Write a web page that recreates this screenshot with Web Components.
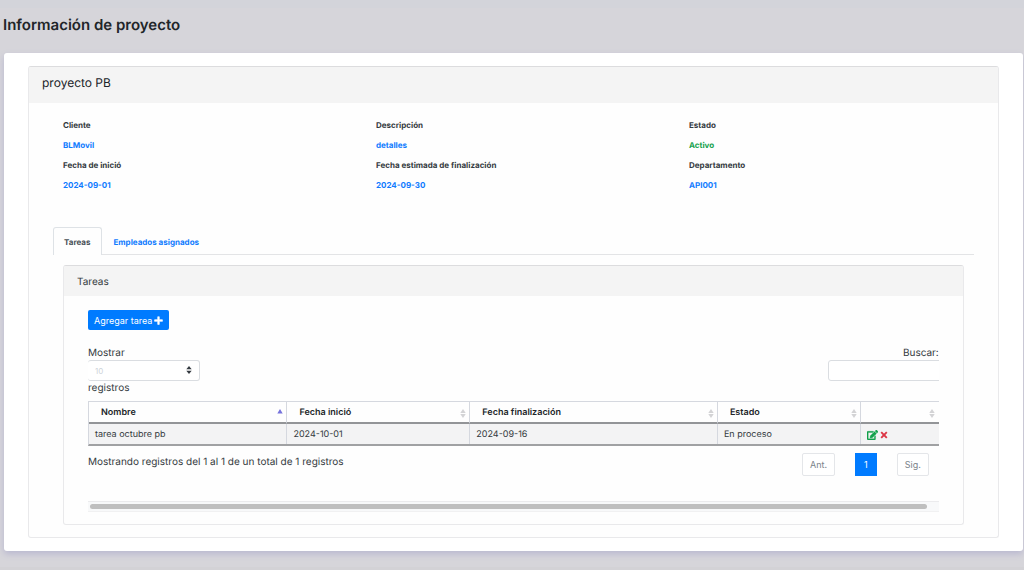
<!DOCTYPE html>
<html lang="es">
<head>
<meta charset="utf-8">
<title>Información de proyecto</title>
<style>
  html { background: #d6d5da; }
  body { margin: 0; font-family: Inter, "Liberation Sans", sans-serif; color: #343a40; text-rendering: geometricPrecision; }
</style>
</head>
<body>
<project-page></project-page>

<template id="page-tpl">
  <style>
    :host { display: block; border-top: 8px solid #d3d4da; border-bottom: 3px solid #d3d2d6; padding: 0 1px 16px 4px; }
    h1 { margin: 0 0 0 -1px; font-size: 15px; line-height: 34px; font-weight: 600; color: #212529; }
    main { margin-top: 11px; padding: 13px 24px; background: #fff; border-radius: 3px; box-shadow: 0 3px 6px #b9b8d0; }
    .fields { display: grid; grid-template-columns: repeat(3, 1fr); padding: 12px 0 0 34px; margin-right: -4px; }
    .tasks { padding: 10px 34px 12px; }
    nav { padding: 32px 24px 0; }
  </style>
  <h1>Información de proyecto</h1>
  <main>
    <ui-card class="outer">
      <span slot="title">proyecto PB</span>
      <div class="fields">
        <info-field label="Cliente">BLMovil</info-field>
        <info-field label="Descripción">detalles</info-field>
        <info-field label="Estado" tone="success">Activo</info-field>
        <info-field label="Fecha de inició">2024-09-01</info-field>
        <info-field label="Fecha estimada de finalización">2024-09-30</info-field>
        <info-field label="Departamento">API001</info-field>
      </div>
      <nav><tab-bar></tab-bar></nav>
      <div class="tasks">
        <ui-card small>
          <span slot="title">Tareas</span>
          <task-list></task-list>
        </ui-card>
      </div>
    </ui-card>
  </main>
</template>

<template id="card-tpl">
  <style>
    :host { display: block; border: 1px solid #e9e9eb; border-top-color: #dcdcde; border-radius: 3px; background: #fefefe; }
    h2 { margin: 0; padding: 0 13px; font-size: 12px; line-height: 32px; padding-bottom: 4px; font-weight: 400; background: #f4f4f4; color: #212529; border-radius: 2px 2px 0 0; }
    :host([small]) h2 { font-size: 10px; line-height: 28px; padding-top: 2px; padding-bottom: 0; color: #343a40; }
  </style>
  <h2><slot name="title"></slot></h2>
  <slot></slot>
</template>

<template id="field-tpl">
  <style>
    :host { display: block; font-size: 8px; line-height: 20px; font-weight: 700; }
    dl, dd { margin: 0; }
    dt { color: #343a40; }
    dd { color: #0f7bff; }
    :host([tone="success"]) dd { color: #12a14b; }
  </style>
  <dl><dt></dt><dd><slot></slot></dd></dl>
</template>

<template id="tabs-tpl">
  <style>
    :host { display: flex; border-bottom: 1px solid #e3e4e6; font-size: 8px; line-height: 24px; font-weight: 700; }
    a { padding: 2px 11px 0 10px; color: #0f7bff; text-decoration: none; border: 1px solid transparent; border-bottom: 0; }
    a[aria-current] { color: #495057; background: #fefefe; border-color: #dee2e6; border-radius: 3px 3px 0 0; margin-bottom: -1px; padding-bottom: 1px; }
  </style>
  <a href="#tareas" aria-current="page">Tareas</a><a href="#empleados">Empleados asignados</a>
</template>

<template id="list-tpl">
  <style>
    :host { display: block; padding: 14px 24px 12px; font-size: 10px; line-height: 14px; }
    .add { display: flex; align-items: center; gap: 2px; height: 20px; padding: 0 6px; border: 0; border-radius: 2px; background: #007bff; color: #fff; font: 9px Inter, "Liberation Sans", sans-serif; }
    .add svg { width: 9px; height: 9px; }
    .scroll { overflow: hidden; margin-top: 16px; }
    .wide { width: 101.5%; }
    .bar { display: flex; justify-content: space-between; }
    label { display: block; padding-top: 1px; line-height: 13px; }
    .find { text-align: right; display: grid; justify-items: end; align-content: start; padding-right: 13px; }
    .pick { position: relative; display: block; width: 112px; }
    .pick svg { position: absolute; right: 8px; top: 6px; width: 6px; height: 8px; pointer-events: none; }
    select, input { box-sizing: border-box; display: block; height: 21px; border: 1px solid #dadde1; border-radius: 3px; background: #fff; font: 8px Inter, "Liberation Sans", sans-serif; }
    select { appearance: none; width: 100%; border-left: 0; padding: 0 7px; color: #ced4da; }
    input { width: 124px; margin-right: -13px; }
    table { width: 100%; margin-top: 6px; table-layout: fixed; border-collapse: separate; border-spacing: 0; border-top: 1px solid #d5d8df; border-left: 1px solid #d5d8df; border-bottom: 2px solid #a0a1a3; font-size: 9px; }
    th, td { box-sizing: border-box; text-align: left; border-right: 1px solid #d5d8df; }
    th { height: 22px; padding: 2px 12px 0; color: #212529; font-weight: 600; border-bottom: 2px solid #929497; }
    td { height: 20px; padding: 2px 6px 0; background: #f3f3f4; line-height: 18px; }
    .head { display: flex; justify-content: space-between; align-items: center; margin-right: -9px; min-height: 14px; }
    th:last-child .head { margin-right: -6px; justify-content: flex-end; padding-right: 10px; }
    .head svg { width: 6px; height: 9px; }
    .acts { display: flex; align-items: center; gap: 2px; height: 16px; }
    .acts button { display: flex; padding: 0; border: 0; background: none; }
    .edit svg { width: 11px; height: 10px; }
    .del svg { width: 8px; height: 8px; }
    .foot { display: flex; justify-content: space-between; padding: 7px 23px 0 0; }
    .foot p { margin: 0; line-height: 18px; }
    .pages { display: flex; gap: 20px; }
    .pages button { box-sizing: border-box; height: 23px; padding: 0 7px; border: 1px solid #e4e6e9; border-radius: 2px; background: #fff; color: #7b838a; font: 9px Inter, "Liberation Sans", sans-serif; }
    .pages .now { background: #007bff; border-color: #007bff; color: #fff; border-radius: 0; padding: 0 8px; }
    .track { margin-top: 25px; padding: 2px 12px 2px 2px; background: #f8f9fa; border-top: 1px solid #ebebed; border-bottom: 1px solid #f1f1f2; }
    .thumb { height: 5px; border-radius: 3px; background: #bfbfbf; }
  </style>
  <button class="add" type="button">Agregar tarea
    <svg viewBox="0 0 9 9"><path d="M3.500 1q0-.6.6-.6h.8q.6 0 .6.6v2.500h2.500q.7 0 .7.6v.8q0 .6-.7.6H5.500V8q0 .7-.6.7h-.8q-.6 0-.6-.7V5.500H1q-.7 0-.7-.6v-.8q0-.6.7-.6h2.500z" fill="#fff" stroke="#fff" stroke-width=".3"/></svg>
  </button>
  <div class="scroll"><div class="wide">
    <div class="bar">
      <div>
        <label for="count">Mostrar</label>
        <span class="pick"><select id="count"><option>10</option><option>25</option><option>50</option></select>
          <svg viewBox="0 0 6 8"><path d="M3 0l2.700 3.300H.3zM3 8L.3 4.700h5.400z" fill="#343a40"/></svg></span>
        <label for="count">registros</label>
      </div>
      <div class="find"><label for="search">Buscar:</label><input id="search" type="search"></div>
    </div>
    <table>
      <colgroup><col style="width:23%"><col style="width:21.2%"><col style="width:28.7%"><col style="width:16.6%"><col></colgroup>
      <thead><tr></tr></thead>
      <tbody><tr><td>tarea octubre pb</td><td>2024-10-01</td><td>2024-09-16</td><td>En proceso</td>
        <td><div class="acts">
          <button class="edit" type="button" aria-label="Editar"><svg viewBox="0 0 576 512"><path fill="#12a14b" stroke="#12a14b" stroke-width="16" d="M402.600 83.200l90.200 90.200c3.800 3.800 3.800 10 0 13.800L274.400 405.600l-92.800 10.300c-12.400 1.400-22.900-9.100-21.500-21.500l10.300-92.800L388.800 83.200c3.800-3.800 10-3.800 13.800 0zm162-22.900l-48.800-48.800c-15.200-15.200-39.900-15.200-55.200 0l-35.400 35.400c-3.800 3.800-3.800 10 0 13.800l90.200 90.200c3.800 3.800 10 3.800 13.800 0l35.400-35.400c15.200-15.300 15.200-40 0-55.200zM384 346.200V448H64V128h229.800c3.200 0 6.200-1.300 8.500-3.500l40-40c7.600-7.600 2.200-20.500-8.500-20.500H48C21.500 64 0 85.500 0 112v352c0 26.500 21.500 48 48 48h352c26.500 0 48-21.500 48-48V306.200c0-10.700-12.900-16-20.500-8.500l-40 40c-2.200 2.300-3.500 5.300-3.500 8.500z"/></svg></button>
          <button class="del" type="button" aria-label="Eliminar"><svg viewBox="0 0 8 8"><path d="M1.200 1.200l5.600 5.600m0-5.600l-5.600 5.600" stroke="#dc3545" stroke-width="1.900"/></svg></button>
        </div></td></tr></tbody>
    </table>
    <div class="foot"><p>Mostrando registros del 1 al 1 de un total de 1 registros</p>
      <div class="pages"><button type="button">Ant.</button><button type="button" class="now">1</button><button type="button">Sig.</button></div>
    </div>
  </div>
  <div class="track"><div class="thumb"></div></div>
  </div>
</template>

<script>
  function define(name, id, setup) {
    customElements.define(name, class extends HTMLElement {
      constructor() {
        super();
        this.attachShadow({ mode: "open" }).append(document.getElementById(id).content.cloneNode(true));
      }
      connectedCallback() { if (setup) setup(this, this.shadowRoot); }
    });
  }
  define("ui-card", "card-tpl");
  define("info-field", "field-tpl", (el, root) => {
    root.querySelector("dt").textContent = el.getAttribute("label");
  });
  define("tab-bar", "tabs-tpl");
  define("task-list", "list-tpl", (el, root) => {
    const up = '<svg viewBox="0 0 6 10"><path d="M3 0l3 5H0z" fill="#7673dc"/></svg>';
    const both = '<svg viewBox="0 0 6 10"><path d="M3 0l3 4.500H0zM3 10L0 5.500h6z" fill="#d3d3d5"/></svg>';
    root.querySelector("thead tr").innerHTML = ["Nombre", "Fecha inició", "Fecha finalización", "Estado", ""]
      .map((t, i) => `<th scope="col"><div class="head">${t}${i ? both : up}</div></th>`).join("");
  });
  define("project-page", "page-tpl");
</script>
</body>
</html>
